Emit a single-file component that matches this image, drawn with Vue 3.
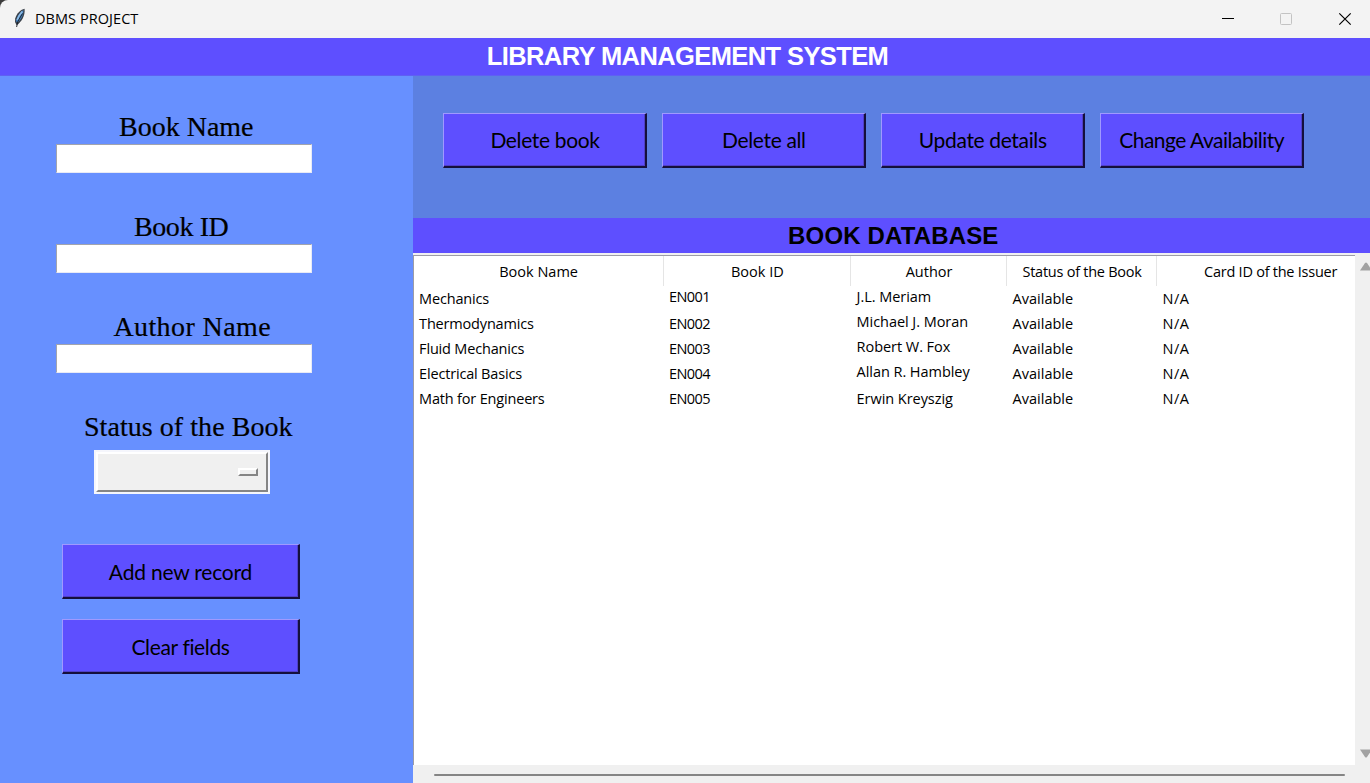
<script setup>
const fields = [
  { label: 'Book Name', cls: 'name' },
  { label: 'Book ID', cls: 'id' },
  { label: 'Author Name', cls: 'author' },
]
const actions = [
  { label: 'Delete book', cls: 'a1' },
  { label: 'Delete all', cls: 'a2' },
  { label: 'Update details', cls: 'a3' },
  { label: 'Change Availability', cls: 'a4' },
]
const columns = ['Book Name', 'Book ID', 'Author', 'Status of the Book', 'Card ID of the Issuer']
const rows = [
  ['Mechanics', 'EN001', 'J.L. Meriam', 'Available', 'N/A'],
  ['Thermodynamics', 'EN002', 'Michael J. Moran', 'Available', 'N/A'],
  ['Fluid Mechanics', 'EN003', 'Robert W. Fox', 'Available', 'N/A'],
  ['Electrical Basics', 'EN004', 'Allan R. Hambley', 'Available', 'N/A'],
  ['Math for Engineers', 'EN005', 'Erwin Kreyszig', 'Available', 'N/A'],
]
const raised = (r, c) => (c === 2 && r < 4) || (c === 1 && r === 0)
</script>

<template>
  <div class="window">
    <header class="titlebar">
      <svg class="feather" width="14" height="20" viewBox="0 0 14 20">
        <path d="M11.600 .8C8 1.500 3.500 5.500 2.200 10.500L2 14L3.600 17.300C8.500 14 12.200 8 11.600 .8Z" fill="#3a4049" />
        <path d="M10.500 2C7.500 4 4 8 3 13L4.300 15C8.500 11 10.500 7 10.500 2Z" fill="#3f7fc0" />
        <path d="M9.300 3.500C7 6 5 9 4.200 12" fill="none" stroke="#8dbbe5" stroke-width="1.800" />
        <path d="M9.500 5.500L4.800 13.500L3.600 19" fill="none" stroke="#1a1d22" stroke-width=".9" />
      </svg>
      <span class="caption">DBMS PROJECT</span>
      <svg class="controls" width="140" height="38" viewBox="0 0 140 38">
        <path d="M2 18.500H14" stroke="#000" />
        <rect x="60.500" y="13.500" width="11" height="11" rx="1" fill="none" stroke="#c3c3c3" />
        <path d="M119.300 13.300L130.700 24.700M130.700 13.300L119.300 24.700" stroke="#000" stroke-width="1.200" />
      </svg>
    </header>
    <h1 class="heading"><span>LIBRARY MANAGEMENT SYSTEM</span></h1>
    <main class="body">
      <aside class="form">
        <div v-for="f in fields" :key="f.cls" class="field">
          <label :class="['label', f.cls]">{{ f.label }}</label>
          <div class="entry"></div>
        </div>
        <div class="status">
          <label class="label status-label">Status of the Book</label>
          <div class="option"><div class="face"><i class="indicator"></i></div></div>
        </div>
        <button class="btn wide add"><span>Add new record</span></button>
        <button class="btn wide clear"><span>Clear fields</span></button>
      </aside>
      <section class="content">
        <div class="toolbar">
          <button v-for="a in actions" :key="a.cls" :class="['btn', a.cls]"><span>{{ a.label }}</span></button>
        </div>
        <h2 class="subheading"><span>BOOK DATABASE</span></h2>
        <div class="viewer">
          <div class="tree">
            <div class="grid head">
              <div v-for="(c, i) in columns" :key="c" :class="['h', 'h' + i]"><span>{{ c }}</span></div>
            </div>
            <div v-for="(row, r) in rows" :key="r" class="grid row">
              <div v-for="(cell, c) in row" :key="c" :class="['cell', 'c' + c, { raised: raised(r, c) }]">{{ cell }}</div>
            </div>
          </div>
          <div class="vscroll">
            <svg width="10" height="9" viewBox="0 0 10 9"><path d="M0 8.500L5 1Q6 0 7 1L12 8.500Z" fill="#a2a2a2" /></svg>
            <svg width="10" height="9" viewBox="0 0 10 9"><path d="M0 .5H12L7 8Q6 9 5 8Z" fill="#a2a2a2" /></svg>
          </div>
        </div>
        <div class="hscroll"><div class="thumb"></div></div>
      </section>
    </main>
  </div>
</template>

<style>
body { background: #3c3c3c; overflow: hidden; }
</style>
<style scoped>
* { box-sizing: border-box; }
.window { width: 1370px; height: 783px; display: flex; flex-direction: column; overflow: hidden; border-top-left-radius: 8px; background: #f3f3f3; color: #000; }
.titlebar { height: 38px; flex: none; display: flex; align-items: center; padding-left: 13px; font: 14.500px/20px "Open Sans", "Noto Sans", sans-serif; }
.feather { flex: none; margin-top: -3px; }
.caption { margin-left: 8px; letter-spacing: 0.060px; }
.controls { margin-left: auto; margin-right: 10px; }
.heading, .subheading { margin: 0; flex: none; display: flex; justify-content: center; align-items: center; background: #5e4fff; font-family: "Liberation Sans", Arial, sans-serif; font-weight: 700; }
.heading { height: 38px; border-bottom: 1px solid #5f60f2; color: #fff; font-size: 25.500px; letter-spacing: -0.600px; padding-left: 5px; }
.body { flex: 1; display: flex; min-height: 0; }
.form { width: 412.600px; flex: none; background: #6790ff; padding-top: 33px; }
.field { height: 100px; padding-left: 56.400px; }
.label { display: block; height: 35px; font: 28px/35px "Liberation Serif", Georgia, serif; white-space: nowrap; -webkit-text-stroke: 0.200px #000; }
.name { padding-left: 62.600px; }
.id { padding-left: 77.600px; letter-spacing: -0.400px; }
.author { padding-left: 57px; letter-spacing: 0.400px; }
.entry { width: 255.600px; height: 29px; background: #fff; border: 1px solid #e8eaf5; border-top-color: #a2a4ad; border-left-color: #a2a4ad; }
.status { height: 135px; }
.status-label { padding-left: 84px; height: 41px; letter-spacing: 0.050px; }
.option { margin-left: 94px; width: 176px; height: 44px; border: 2px solid #f5f6fc; background: #f0f0f0; }
.face { height: 100%; border: 2px solid; border-color: #fff #858585 #858585 #fff; display: flex; align-items: center; justify-content: flex-end; padding-right: 8px; }
.indicator { width: 20px; height: 8px; border: 2px solid; border-color: #fff #858585 #858585 #fff; }
.btn { display: flex; justify-content: center; align-items: center; width: 204px; height: 55px; padding: 1px 0 0; border: 1px solid; border-width: 1px 2px 2px 1px; border-color: #a099ff #15103c #15103c #a099ff; background: #5e4fff; color: #000; font: 21px/26px Lato, sans-serif; letter-spacing: -0.350px; white-space: nowrap; box-shadow: inset -1px -1px #5040c8; }
.toolbar .btn { padding-top: 0; }
.toolbar .a4 { letter-spacing: -0.500px; }
.add { letter-spacing: -0.200px; }
.wide { width: 238px; margin-left: 62px; }
.clear { margin-top: 20px; }
.content { flex: 1; min-width: 0; display: flex; flex-direction: column; }
.toolbar { height: 142px; background: #5c80e1; display: flex; gap: 14.900px; padding: 37px 0 0 30.900px; flex: none; }
.subheading { height: 35px; font-size: 24px; letter-spacing: 0.150px; padding-left: 4px; }
.viewer { flex: 1; min-height: 0; display: flex; background: #f0f0f0; }
.tree { flex: 1; min-width: 0; margin-top: 2px; background: #fff; border-top: 1px solid #9c9ca6; border-left: 1px solid #9c9ca6; overflow: hidden; font: 14.500px/25px "Open Sans", "Noto Sans", sans-serif; }
.grid { display: grid; grid-template-columns: 250px 187.500px 156px 150px 227px; width: 970.500px; }
.head { height: 30px; }
.h { border-right: 1px solid #e5e5e5; padding-left: 1px; display: flex; justify-content: center; align-items: center; white-space: nowrap; }
.cell { height: 25px; padding-left: 5.500px; white-space: nowrap; }
.raised { margin-top: -2.500px; }
.h3, .h4 { letter-spacing: -0.250px; }
.c0 { letter-spacing: -0.180px; }
.c1 { letter-spacing: -0.600px; }
.c2 { letter-spacing: -0.050px; }
.c4 { letter-spacing: 0.500px; }
.vscroll { width: 15.500px; flex: none; display: flex; flex-direction: column; justify-content: space-between; align-items: flex-end; padding: 9px 0 7px; }
.hscroll { height: 18px; flex: none; background: #f0f0f0; padding: 9px 25px 0 21px; }
.thumb { height: 2px; background: #858585; border-radius: 1px; }
</style>
